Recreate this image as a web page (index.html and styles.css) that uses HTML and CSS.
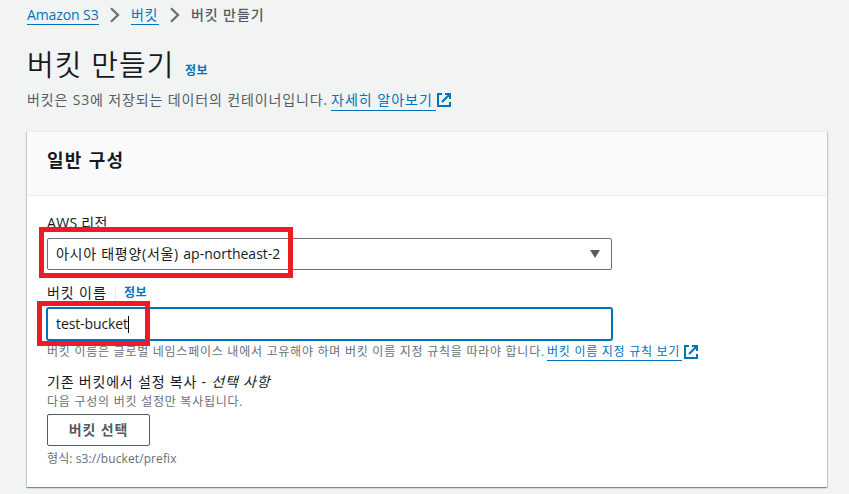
FILE: index.html
```
<!DOCTYPE html>
<html lang="ko">
<head>
<meta charset="utf-8">
<title>버킷 만들기</title>
<link rel="stylesheet" href="styles.css">
</head>
<body>
<nav class="crumbs">
  <a class="link crumb-root">Amazon S3</a>
  <svg class="chevron" viewBox="0 0 10 16"><path d="M1 1.2 8 8l-7 6.8"/></svg>
  <a class="link crumb-bucket">버킷</a>
  <svg class="chevron" viewBox="0 0 10 16"><path d="M1 1.2 8 8l-7 6.8"/></svg>
  <span class="crumb-current">버킷 만들기</span>
</nav>
<header class="page-head">
  <h1>버킷 만들기</h1>
  <a class="info">정보</a>
</header>
<p class="intro"><span class="intro-text">버킷은 S3에 저장되는 데이터의 컨테이너입니다.</span><a class="link intro-link">자세히 알아보기</a><svg class="ext" viewBox="0 0 14 14"><path d="M5 1H1v12h12V9M8 1h5v5M13 1 5 9"/></svg></p>
<main class="panel">
  <div class="panel-head"><h2>일반 구성</h2></div>
  <div class="panel-body">
    <div class="label region-label"><span class="t-region">AWS 리전</span></div>
    <div class="select"><span class="t-select"><span class="ko">아시아 태평양(서울) </span>ap-northeast-2</span><svg class="caret" viewBox="0 0 10 8"><path d="M0 0h10L5 8z"/></svg><i class="mark mark-region"></i></div>
    <div class="label name-label"><span class="t-name">버킷 이름</span><i class="divider"></i><a class="info">정보</a></div>
    <div class="input"><span class="t-input">test-bucket</span><i class="cursor"></i><i class="mark mark-name"></i></div>
    <div class="hint name-hint"><span class="t-hint">버킷 이름은 글로벌 네임스페이스 내에서 고유해야 하며 버킷 이름 지정 규칙을 따라야 합니다.</span><a class="link rule-link">버킷 이름 지정 규칙 보기</a><svg class="ext" viewBox="0 0 14 14"><path d="M5 1H1v12h12V9M8 1h5v5M13 1 5 9"/></svg></div>
    <div class="label copy-label"><span class="t-copy">기존 버킷에서 설정 복사 - <em>선택 사항</em></span></div>
    <div class="hint copy-hint"><span class="t-sub">다음 구성의 버킷 설정만 복사됩니다.</span></div>
    <button class="button"><span class="t-button">버킷 선택</span></button>
    <div class="hint format-hint"><span class="t-format">형식: s3://bucket/prefix</span></div>
  </div>
</main>
</body>
</html>
```
FILE: styles.css
```
* { box-sizing: border-box; }
body {
  margin: 0;
  height: 494px;
  overflow: hidden;
  background: #f2f3f3;
  color: #16191f;
  font: 14px/20px "Open Sans", "Noto Sans CJK KR", sans-serif;
  white-space: nowrap;
}
h1, h2, p { margin: 0; font-weight: 400; }
.link { color: #0073bb; border-bottom: 1px solid #0073bb; flex: none; }
.info { color: #0073bb; font-size: 12px; font-weight: 600; letter-spacing: .5px; }
.ext { width: 14px; height: 14px; fill: none; stroke: #0073bb; stroke-width: 2; flex: none; }

.crumbs { display: flex; align-items: center; height: 30px; padding-left: 27px; }
.crumbs .link { height: 20px; line-height: 20px; }
.crumb-root { width: 72px; letter-spacing: -.1px; }
.crumb-bucket { width: 28px; letter-spacing: .6px; }
.chevron { width: 10px; height: 16px; margin: 0 11px; fill: none; stroke: #687078; stroke-width: 2.3; }
.crumb-current { color: #545b64; font-weight: 500; letter-spacing: .9px; }

.page-head { display: flex; align-items: center; height: 60px; padding: 10px 0 0 27px; }
h1 { width: 158px; font-size: 29px; line-height: 40px; font-weight: 350; letter-spacing: 1.1px; }
.page-head .info { padding-top: 11px; }

.intro { display: flex; align-items: center; height: 20px; padding-left: 27px; color: #545b64; letter-spacing: .86px; }
.intro-text { width: 304px; }
.intro-link { width: 105px; margin-right: 1px; letter-spacing: 1px; }

.panel {
  width: 800px;
  height: 356px;
  margin: 21px 0 0 27px;
  background: #fff;
  border-top: 1px solid #eaeded;
  box-shadow: 0 1px 1px rgba(0,28,36,.3), 1px 1px 1px rgba(0,28,36,.15), -1px 1px 1px rgba(0,28,36,.15);
}
.panel-head { height: 64px; padding: 14px 20px; background: #fafafa; border-bottom: 1px solid #eaeded; }
h2 { font-size: 18px; line-height: 28px; font-weight: 700; letter-spacing: 1.3px; }
.panel-body { padding: 17px 20px 0; }
.label { display: flex; align-items: center; height: 20px; }
.t-region { letter-spacing: .3px; }
.select {
  position: relative;
  display: flex;
  align-items: center;
  justify-content: space-between;
  width: 565px;
  height: 32px;
  margin-top: 5px;
  padding: 0 11px 0 8px;
  border: 1px solid #687078;
  border-radius: 2px;
}
.ko { letter-spacing: .73px; }
.caret { width: 10px; height: 8px; fill: #545b64; }
.name-label { margin-top: 13px; }
.t-name { width: 68px; letter-spacing: .9px; }
.divider { width: 1px; height: 17px; margin-right: 8px; background: #eaeded; }
.input {
  position: relative;
  display: flex;
  align-items: center;
  width: 567px;
  height: 34px;
  margin: 4px 0 0 -1px;
  padding-left: 8px;
  border: 2px solid #0073bb;
  border-radius: 3px;
}
.t-input { letter-spacing: -.1px; }
.cursor { width: 1px; height: 17px; background: #000; }
.mark { position: absolute; border: 5px solid #ed1c24; }
.mark-region { left: -9px; top: -12px; width: 254px; height: 51px; }
.mark-name { left: -11px; top: -8px; width: 113px; height: 45px; }
.hint { display: flex; align-items: center; height: 18px; color: #687078; font-size: 12px; line-height: 16px; }
.name-hint { margin-top: 2px; }
.t-hint { width: 500px; letter-spacing: .74px; }
.rule-link { width: 135px; margin-right: 2px; letter-spacing: .73px; }
.copy-label { margin-top: 11px; }
.t-copy { letter-spacing: .8px; }
.t-sub { letter-spacing: .75px; position: relative; top: 1px; }
.button {
  display: flex;
  align-items: center;
  justify-content: center;
  width: 103px;
  height: 32px;
  margin: 4px 0 0;
  padding: 0;
  background: #fff;
  border: 1px solid #545b64;
  border-radius: 2px;
  color: #545b64;
  font: 600 14px/20px "Open Sans", "Noto Sans CJK KR", sans-serif;
  letter-spacing: .9px;
}
.format-hint { margin-top: 4px; }
.t-format { letter-spacing: .1px; }
```
